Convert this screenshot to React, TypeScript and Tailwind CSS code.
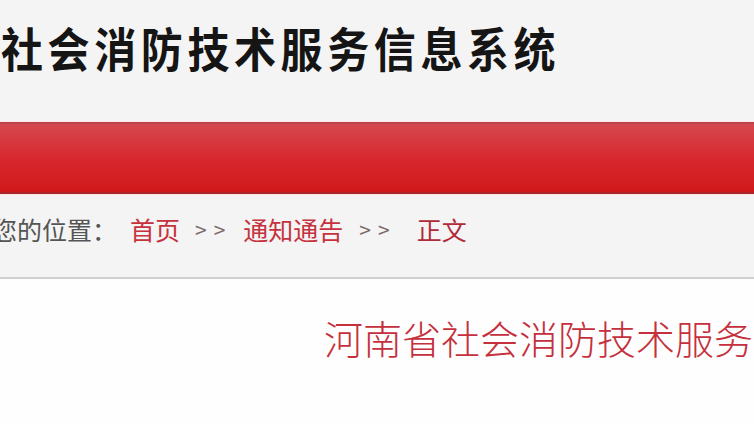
import React from "react";

const cjk = { fontFamily: '"Noto Sans CJK SC", "Noto Sans", sans-serif' };

const App: React.FC = () => {
  return (
    <div
      className="w-[754px] h-[424px] overflow-hidden bg-[#f4f4f4] flex flex-col"
      style={cjk}
    >
      {/* Header title */}
      <div className="h-[122px] shrink-0 pt-[21px] pl-[1px]">
        <h1 className="text-[42px] leading-[48px] font-bold text-[#151515] whitespace-nowrap tracking-[4.6px] origin-top scale-y-[1.1]">
          社会消防技术服务信息系统
        </h1>
      </div>

      {/* Red nav bar */}
      <div className="h-[72px] shrink-0 border-t-2 border-t-[#b9464c] border-b-2 border-b-[#a9262c] bg-gradient-to-b from-[#d5464e] via-[#d7282e] to-[#d0181a] shadow-[0_-1px_0_#fde4e0,0_1px_0_#fde4e0]" />

      {/* Breadcrumb */}
      <div className="h-[85px] shrink-0 flex items-center pb-[12px] border-b-2 border-b-[#cfcfcf] text-[25px] leading-none whitespace-nowrap -ml-[8px]">
        <span className="text-[#555]">您的位置：</span>
        <a className="ml-[13px] text-[#c5323d]">首页</a>
        <span className="ml-[15px] text-[#7a6a6c] text-[21px] tracking-[7px]">&gt;&gt;</span>
        <a className="ml-[11px] text-[#c5323d]">通知通告</a>
        <span className="ml-[16px] text-[#7a6a6c] text-[21px] tracking-[7px]">&gt;&gt;</span>
        <a className="ml-[20px] text-[#b02a3a]">正文</a>
      </div>

      {/* Article */}
      <div className="flex-1 bg-[#fefefe] pt-[32px] pl-[324px]">
        <h2 className="text-[39px] leading-[52px] font-light text-[#c5303c] whitespace-nowrap">
          河南省社会消防技术服务信息系统
        </h2>
      </div>
    </div>
  );
};

export default App;
